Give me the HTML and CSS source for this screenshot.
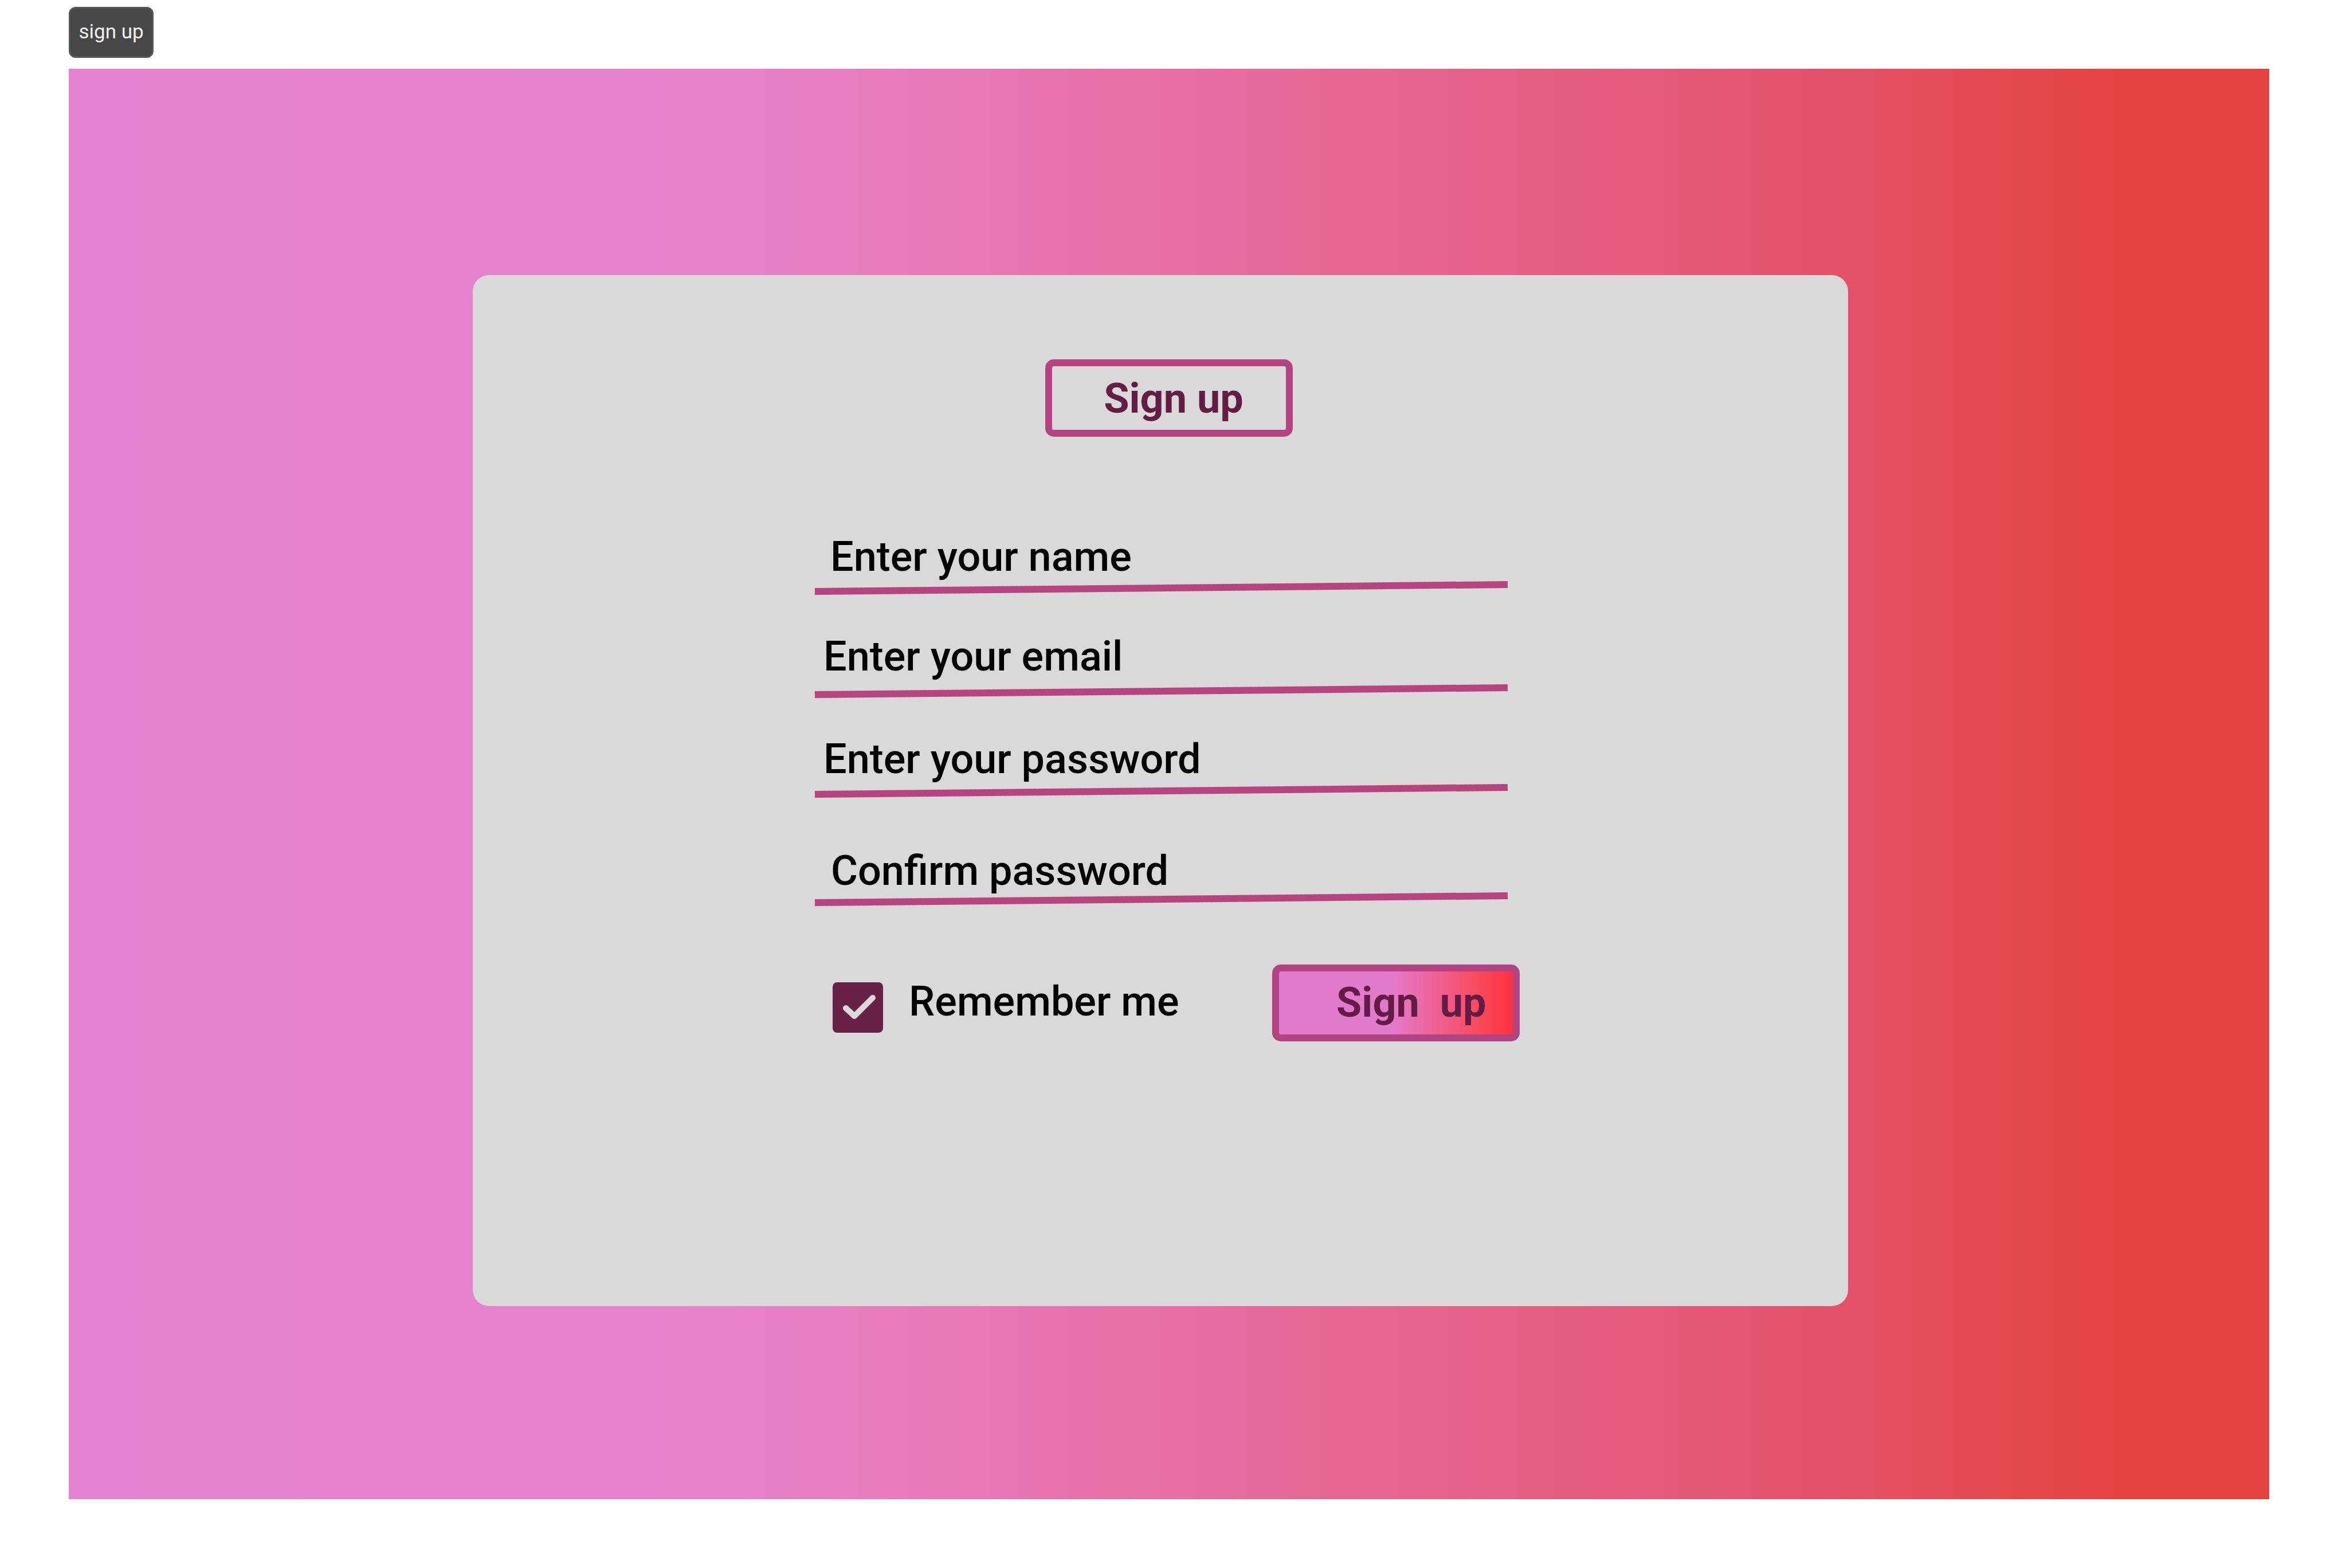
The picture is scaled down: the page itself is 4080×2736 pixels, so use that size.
FILE: index.html
```html
<!DOCTYPE html>
<html lang="en">
<head>
<meta charset="utf-8">
<title>Sign up</title>
<link rel="stylesheet" href="styles.css">
</head>
<body>
<button class="top-btn" type="button">sign up</button>
<section class="stage">
  <div class="card">
    <h1 class="title">Sign up</h1>
    <form class="form">
      <div class="field f-name">
        <span class="label">Enter your name</span>
        <div class="rule"></div>
      </div>
      <div class="field f-email">
        <span class="label">Enter your email</span>
        <div class="rule"></div>
      </div>
      <div class="field f-pass">
        <span class="label">Enter your password</span>
        <div class="rule"></div>
      </div>
      <div class="field f-confirm">
        <span class="label">Confirm password</span>
        <div class="rule"></div>
      </div>
      <div class="row">
        <span class="check">
          <svg width="88" height="88" viewBox="0 0 88 88"><polyline points="23,45 38,59 70,27" fill="none" stroke="#dadada" stroke-width="10" stroke-linecap="round" stroke-linejoin="round"/></svg>
        </span>
        <span class="remember">Remember me</span>
        <button class="submit" type="button">Sign&nbsp; up</button>
      </div>
    </form>
  </div>
</section>
</body>
</html>
```

FILE: styles.css
```css
body {
  margin: 0;
  background: #ffffff;
  font-family: Roboto, "Liberation Sans", sans-serif;
}

.top-btn {
  display: block;
  margin: 12px 0 0 120px;
  width: 148px;
  height: 89px;
  padding: 0 0 2px 0;
  background: #474747;
  border: 3px solid #555555;
  border-radius: 12px;
  color: #f0f0f0;
  font: 400 35px Roboto, "Liberation Sans", sans-serif;
}

.stage {
  margin: 19px 0 0 120px;
  width: 3840px;
  height: 2496px;
  box-sizing: border-box;
  padding: 360px 0 0 705px;
  background: linear-gradient(90deg, #e482d1 0%, #e882cb 30%, #e4526a 80%, #e3433f 93%, #e3433f 100%);
}

.card {
  width: 2400px;
  height: 1799px;
  box-sizing: border-box;
  padding-top: 147px;
  background: #d9d9d9;
  border-radius: 28px;
}

.title {
  margin: 0 0 0 999px;
  width: 432px;
  height: 135px;
  box-sizing: border-box;
  padding: 14px 0 0 16px;
  border: 12px solid #b5437f;
  border-radius: 15px;
  color: #641b45;
  font: 700 72px/85px Roboto, "Liberation Sans", sans-serif;
  text-align: center;
}

.form {
  margin: 168px 0 0 597px;
  width: 1209px;
}

.label {
  display: block;
  color: #000000;
  font: 500 72px/84px Roboto, "Liberation Sans", sans-serif;
  white-space: nowrap;
}

.rule {
  height: 12px;
  background: #b6447f;
  transform: rotate(-0.57deg);
}

.f-name .label { padding-left: 27px; }
.f-name .rule { margin-top: 6px; }

.f-email { margin-top: 72px; }
.f-email .label { padding-left: 15px; }
.f-email .rule { margin-top: 12px; }

.f-pass { margin-top: 71px; }
.f-pass .label { padding-left: 15px; }
.f-pass .rule { margin-top: 7px; }

.f-confirm { margin-top: 92px; }
.f-confirm .label { padding-left: 28px; }
.f-confirm .rule { margin-top: 1px; }

.row {
  margin-top: 108px;
  display: flex;
  align-items: flex-start;
}

.check {
  flex: none;
  display: block;
  margin: 31px 0 0 31px;
  width: 88px;
  height: 88px;
  border-radius: 8px;
  background: #6a2148;
}

.check svg {
  display: block;
}

.remember {
  flex: none;
  margin: 23px 0 0 45px;
  width: 634px;
  color: #000000;
  font: 500 72px/84px Roboto, "Liberation Sans", sans-serif;
  white-space: nowrap;
}

.submit {
  flex: none;
  width: 432px;
  height: 134px;
  box-sizing: border-box;
  padding: 0 0 0 100px;
  border: 12px solid #b24283;
  border-radius: 15px;
  background: linear-gradient(90deg, #e27acb 0%, #e27acb 48%, #ee6396 66%, #f94a5c 85%, #fd3340 100%);
  color: #641b45;
  font: 700 72px/86px Roboto, "Liberation Sans", sans-serif;
  text-align: left;
  vertical-align: top;
  white-space: nowrap;
}
```
